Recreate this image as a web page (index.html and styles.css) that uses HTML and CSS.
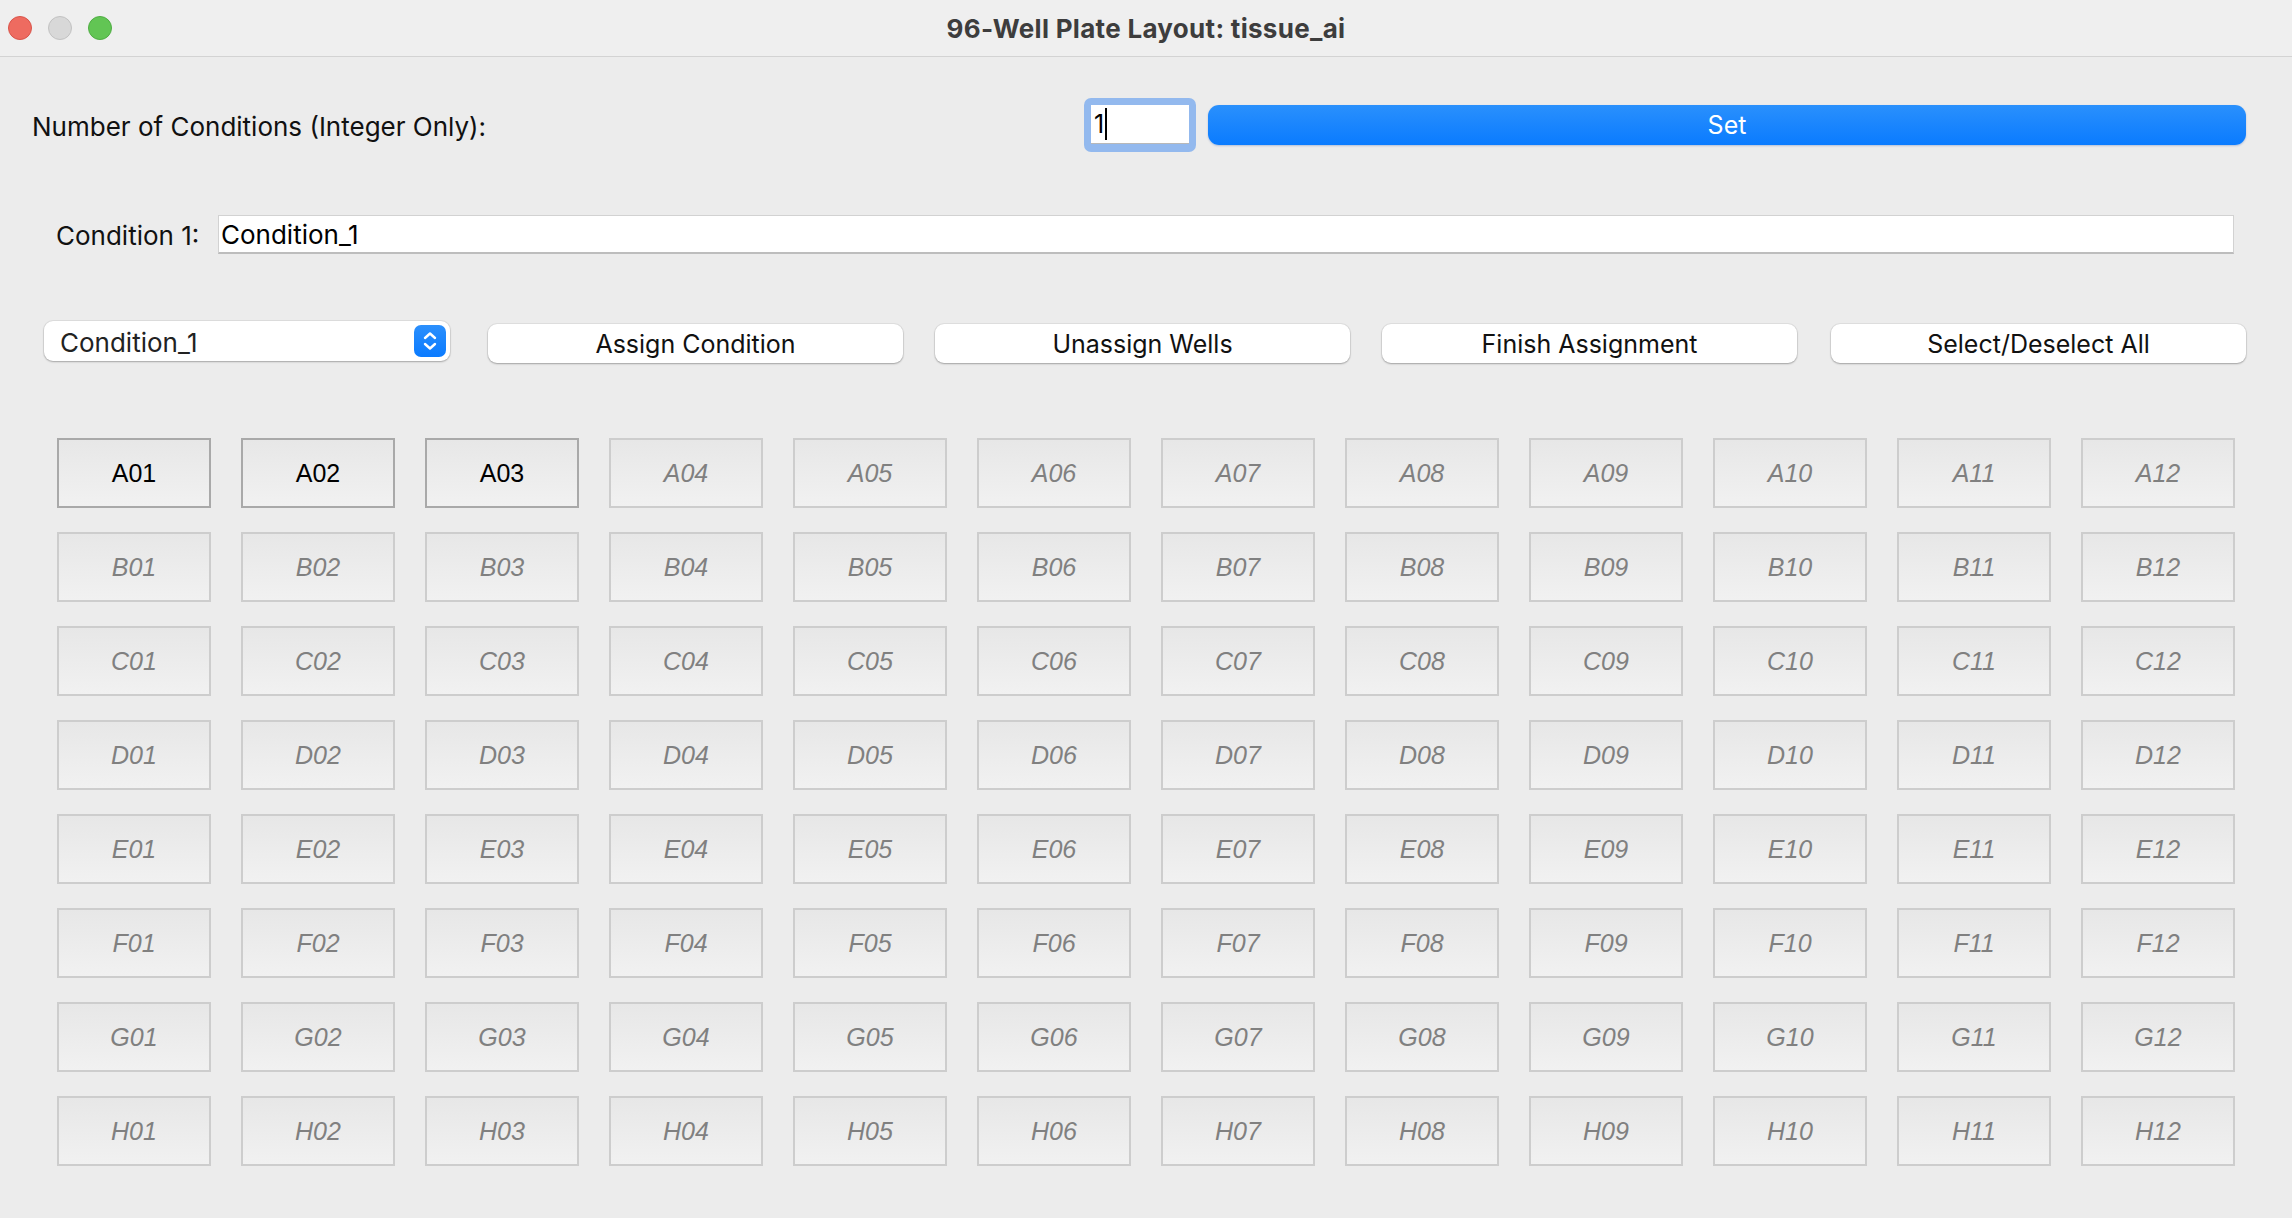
FILE: index.html
```html
<!DOCTYPE html>
<html>
<head>
<meta charset="utf-8">
<title>96-Well Plate Layout: tissue_ai</title>
<link rel="stylesheet" href="styles.css">
</head>
<body>
<div class="window">
  <header class="titlebar">
    <div class="lights">
      <span class="light red"></span>
      <span class="light gray"></span>
      <span class="light green"></span>
    </div>
    <div class="title">96-Well Plate Layout: tissue_ai</div>
    <div></div>
  </header>

  <div class="row-count">
    <div class="label">Number of Conditions (Integer Only):</div>
    <div class="focus-ring"><div class="entry">1<span class="caret"></span></div></div>
    <button class="btn-primary">Set</button>
  </div>

  <div class="row-cond">
    <div class="label">Condition 1:</div>
    <div class="textfield">Condition_1</div>
  </div>

  <div class="row-actions">
    <div class="popup">
      <span class="popup-text">Condition_1</span>
      <span class="stepper">
        <svg width="18" height="22" viewBox="0 0 18 22"><path d="M4 8 L9 3.5 L14 8" fill="none" stroke="#fff" stroke-width="2.4" stroke-linecap="round" stroke-linejoin="round"/><path d="M4 14 L9 18.5 L14 14" fill="none" stroke="#fff" stroke-width="2.4" stroke-linecap="round" stroke-linejoin="round"/></svg>
      </span>
    </div>
    <button class="btn">Assign Condition</button>
    <button class="btn">Unassign Wells</button>
    <button class="btn">Finish Assignment</button>
    <button class="btn">Select/Deselect All</button>
  </div>

  <div class="plate" id="plate"></div>
</div>
<script src="app.js"></script>
</body>
</html>
```

FILE: app.js
```js
(function () {
  var plate = document.getElementById('plate');
  var rows = 'ABCDEFGH';
  var enabled = { A01: 1, A02: 1, A03: 1 };
  for (var r = 0; r < rows.length; r++) {
    for (var c = 1; c <= 12; c++) {
      var name = rows[r] + (c < 10 ? '0' + c : '' + c);
      var d = document.createElement('div');
      d.className = 'well' + (enabled[name] ? ' active' : '');
      d.textContent = name;
      plate.appendChild(d);
    }
  }
})();
```

FILE: styles.css
```css
* { box-sizing: border-box; }
html, body { margin: 0; padding: 0; }
body {
  width: 2292px;
  height: 1218px;
  background: #ececec;
  font-family: "Inter", "Liberation Sans", sans-serif;
  color: #1a1a1a;
  overflow: hidden;
}
.window { width: 2292px; height: 1218px; background: #ececec; }

.titlebar {
  height: 57px;
  background: #efefef;
  border-bottom: 1px solid #d3d3d3;
  display: grid;
  grid-template-columns: 1fr auto 1fr;
  align-items: center;
}
.lights { display: flex; gap: 16px; padding-left: 8px; padding-bottom: 1px; }
.light { width: 24px; height: 24px; border-radius: 50%; display: block; }
.light.red { background: #ee6b60; border: 1px solid #d9544a; }
.light.gray { background: #d8d8d8; border: 1px solid #c2c2c2; }
.light.green { background: #62c554; border: 1px solid #4fad43; }
.title {
  font-weight: 700;
  font-size: 26px;
  color: #3d3d3d;
  letter-spacing: 0.3px;
}

.row-count {
  margin-top: 41px;
  height: 54px;
  display: flex;
  align-items: center;
  padding: 0 46px 0 32px;
}
.row-count .label { flex: 1; font-size: 26px; color: #111; padding-top: 2px; }
.focus-ring {
  width: 112px;
  height: 54px;
  border-radius: 7px;
  background: #93b9ee;
  padding: 7px 7px 8px 7px;
}
.entry {
  height: 39px;
  background: #fff;
  border-bottom: 1px solid #b8b8b8;
  font-size: 25px;
  line-height: 38px;
  padding-left: 3px;
  color: #000;
  display: flex;
  align-items: center;
}
.caret { display: inline-block; width: 2px; height: 32px; background: #000; margin-left: 1px; }
.btn-primary {
  width: 1038px;
  height: 40px;
  margin-left: 12px;
  border: none;
  border-radius: 11px;
  background: linear-gradient(#2a90fc, #0a7bff);
  box-shadow: 0 1px 2px rgba(0,60,160,0.25);
  color: #fff;
  font-family: "Inter", "Liberation Sans", sans-serif;
  font-size: 25px;
  padding: 0;
}

.row-cond {
  margin-top: 63px;
  display: flex;
  align-items: center;
  padding: 0 58px 0 56px;
}
.row-cond .label { width: 162px; font-size: 26px; color: #111; padding-top: 2px; }
.textfield {
  flex: 1;
  height: 39px;
  background: #fff;
  border: 1px solid #d2d2d2;
  border-bottom: 2px solid #bdbdbd;
  font-size: 26px;
  line-height: 37px;
  padding-left: 2px;
  color: #000;
}

.row-actions {
  margin-top: 67px;
  height: 42px;
  display: flex;
  align-items: flex-start;
  padding: 0 46px 0 44px;
}
.popup {
  width: 406px;
  height: 40px;
  background: #fff;
  border-radius: 9px;
  box-shadow: 0 0 0 1px rgba(0,0,0,0.06), 0 1px 2px rgba(0,0,0,0.25);
  display: flex;
  align-items: center;
  justify-content: space-between;
  padding: 0 4px 0 16px;
  margin-right: 38px;
}
.popup-text { font-size: 26px; color: #222; padding-top: 2px; }
.stepper {
  width: 32px;
  height: 32px;
  border-radius: 7px;
  background: linear-gradient(#2b8ffc, #0a7bff);
  display: flex;
  align-items: center;
  justify-content: center;
}
.btn {
  width: 415px;
  height: 39px;
  margin-top: 3px;
  margin-right: 32px;
  border: none;
  border-radius: 9px;
  background: #fff;
  box-shadow: 0 0 0 1px rgba(0,0,0,0.05), 0 1px 2px rgba(0,0,0,0.28);
  font-family: "Inter", "Liberation Sans", sans-serif;
  font-size: 25px;
  color: #111;
  padding: 0;
}
.btn:last-child { margin-right: 0; margin-left: 2px; }

.plate {
  margin-top: 75px;
  margin-left: 57px;
  display: grid;
  grid-template-columns: repeat(12, 154px);
  grid-auto-rows: 70px;
  column-gap: 30px;
  row-gap: 24px;
}
.well {
  border: 2px solid #cdcdcd;
  background: linear-gradient(#e7e7e7, #f1f1f1);
  display: flex;
  align-items: center;
  justify-content: center;
  font-family: "Liberation Sans", Arial, sans-serif;
  font-size: 25px;
  font-style: italic;
  color: #808080;
  padding-top: 1px;
}
.well.active {
  border-color: #a9a9a9;
  font-style: normal;
  color: #000;
}
```
